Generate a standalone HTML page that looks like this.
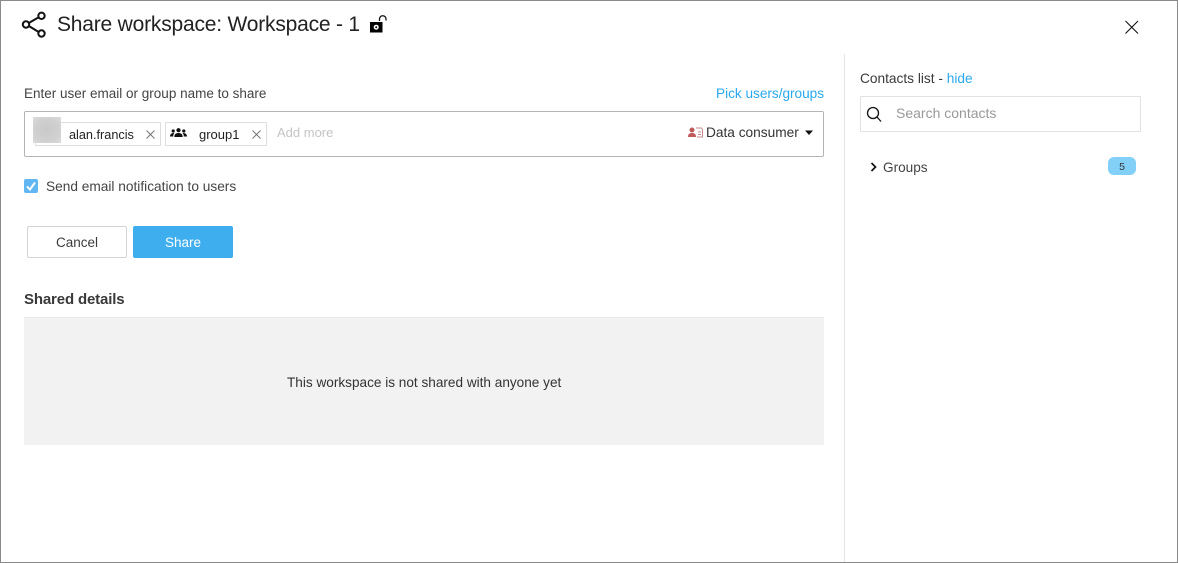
<!DOCTYPE html>
<html><head><meta charset="utf-8"><style>
html,body{margin:0;padding:0;background:#fff}
body{width:1178px;height:563px;position:relative;overflow:hidden;font-family:"Liberation Sans",sans-serif;color:#3a3a3a}
.f{position:absolute;left:0;top:0;width:1176px;height:561px;border:1px solid #8a8a8a}
.a{position:absolute;white-space:nowrap;line-height:1}
.b{position:absolute;box-sizing:border-box}
</style></head><body>
<div class="f"></div>
<svg class="b" style="left:21px;top:11px" width="27" height="27" viewBox="0 0 27 27" fill="none" stroke="#111" stroke-width="2"><circle cx="20.500" cy="4.800" r="3.200"/><circle cx="20.500" cy="22.500" r="3.200"/><circle cx="5" cy="13.500" r="3.200"/><path d="M7.800 12 17.700 6.300M7.800 15 17.700 21"/></svg>
<div class="a" style="left:57px;top:14px;font-size:21px;letter-spacing:-.2px;color:#222">Share workspace: Workspace - 1</div>
<svg class="b" style="left:369px;top:15px" width="19" height="18" viewBox="0 0 19 18"><rect x="1" y="7" width="12.500" height="10.500" fill="#000"/><circle cx="7.200" cy="12.200" r="2.500" fill="#fff"/><circle cx="7.200" cy="12.200" r="1" fill="#000"/><path d="M10.500 6V4a3 3 0 0 1 6.500 0v1.500" fill="none" stroke="#111" stroke-width="1.300"/></svg>
<svg class="b" style="left:1124px;top:19px" width="16" height="16" viewBox="0 0 16 16" stroke="#111" stroke-width="1.100"><path d="M1.500 2 14 14.500M14 2 1.500 14.500"/></svg>
<div class="b" style="left:844px;top:54px;width:1px;height:508px;background:#e6e6e6"></div>

<div class="a" style="left:24px;top:87px;font-size:13.500px;color:#444">Enter user email or group name to share</div>
<div class="a" style="left:716px;top:87px;font-size:13.600px;color:#2aa8ee">Pick users/groups</div>
<div class="b" style="left:24px;top:111px;width:800px;height:46px;border:1px solid #b4b4b4;border-radius:2px"></div>

<div class="b" style="left:35px;top:122px;width:126px;height:24px;border:1px solid #ddd;border-radius:1px"></div>
<div class="b" style="left:33px;top:117px;width:28px;height:26px;background:radial-gradient(ellipse at center,#c9c9c9 0%,#d0d0d0 60%,#dcdcdc 100%)"></div>
<div class="a" style="left:69px;top:129px;font-size:12.700px;color:#222">alan.francis</div>
<svg class="b" style="left:145px;top:129px" width="11" height="11" viewBox="0 0 11 11" stroke="#777" stroke-width="1"><path d="M1.500 1.500 9.500 9.500M9.500 1.500 1.500 9.500"/></svg>
<div class="b" style="left:165px;top:122px;width:102px;height:24px;border:1px solid #ddd;border-radius:1px"></div>
<svg class="b" style="left:170px;top:128px" width="17" height="10" viewBox="0 0 17 10" fill="#111"><circle cx="8.500" cy="2.200" r="2.100"/><circle cx="3.200" cy="3" r="1.600"/><circle cx="13.800" cy="3" r="1.600"/><path d="M4.300 9c0-3 1.800-4 4.200-4s4.200 1 4.200 4zM0 8.500c0-2 1.300-3.500 3.400-3.500.4 0 .7 0 1 .1-1 .9-1.200 2.100-1.200 3.400zM17 8.500c0-2-1.300-3.500-3.400-3.500-.4 0-.7 0-1 .1 1 .9 1.200 2.100 1.200 3.400z"/></svg>
<div class="a" style="left:199px;top:128px;font-size:13px;color:#222">group1</div>
<svg class="b" style="left:251px;top:129px" width="11" height="11" viewBox="0 0 11 11" stroke="#777" stroke-width="1"><path d="M1.500 1.500 9.500 9.500M9.500 1.500 1.500 9.500"/></svg>
<div class="a" style="left:277px;top:126px;font-size:13px;color:#c4c4c4">Add more</div>
<svg class="b" style="left:688px;top:127px" width="15" height="11" viewBox="0 0 15 11"><circle cx="4" cy="3" r="2.500" fill="#bd5a5a"/><path d="M0 10c0-3 1.500-4 4-4s4 1 4 4z" fill="#bd5a5a"/><path d="M8 1h5.500l1 1.500V10H9" fill="none" stroke="#c98a8a"/><path d="M10 5h3M10 7.500h3" stroke="#c98a8a"/></svg>
<div class="a" style="left:706px;top:126px;font-size:13.700px;color:#333">Data consumer</div>
<svg class="b" style="left:804px;top:130px" width="10" height="6" viewBox="0 0 10 6"><path d="M1 .5h8L5 5z" fill="#111"/></svg>

<div class="b" style="left:24px;top:179px;width:14px;height:14px;background:#62b6f2;border-radius:2px"></div>
<svg class="b" style="left:24px;top:179px" width="14" height="14" viewBox="0 0 14 14" fill="none" stroke="#fff" stroke-width="2"><path d="M3 7.500 6 10.500 11 3.500"/></svg>
<div class="a" style="left:46px;top:180px;font-size:13.700px;color:#444">Send email notification to users</div>

<div class="b" style="left:27px;top:226px;width:100px;height:32px;border:1px solid #d4d4d4;border-radius:2px;background:#fff;font-size:13.500px;line-height:31px;text-align:center;color:#3c3c3c">Cancel</div>
<div class="b" style="left:133px;top:226px;width:100px;height:32px;border-radius:2px;background:#3eaeee;font-size:13.500px;line-height:33px;text-align:center;color:#fff">Share</div>

<div class="a" style="left:24px;top:292px;font-size:15px;font-weight:bold;color:#3a3a3a;letter-spacing:-.15px">Shared details</div>
<div class="b" style="left:24px;top:317px;width:800px;height:128px;background:#f2f2f2;border-top:1px solid #ebebeb"></div>
<div class="a" style="left:287px;top:376px;font-size:13.600px;color:#333">This workspace is not shared with anyone yet</div>

<div class="a" style="left:860px;top:72px;font-size:13.700px;color:#3a3a3a">Contacts list - <span style="color:#2aa8ee">hide</span></div>
<div class="b" style="left:860px;top:96px;width:281px;height:36px;border:1px solid #e2e2e2;border-radius:1px"></div>
<svg class="b" style="left:866px;top:106px" width="17" height="17" viewBox="0 0 17 17" fill="none" stroke="#111" stroke-width="1.300"><circle cx="7" cy="7" r="5.500"/><path d="M11 11 15 15.500"/></svg>
<div class="a" style="left:896px;top:106px;font-size:14px;color:#999">Search contacts</div>
<svg class="b" style="left:870px;top:162px" width="7" height="10" viewBox="0 0 7 10" fill="none" stroke="#111" stroke-width="1.700"><path d="M1.500 1 5.500 5 1.500 9"/></svg>
<div class="a" style="left:883px;top:161px;font-size:13.600px;color:#444">Groups</div>
<div class="b" style="left:1108px;top:157px;width:28px;height:18px;background:#82d0f8;border-radius:6px;font-size:10.500px;line-height:20px;text-align:center;color:#333">5</div>
</body></html>
